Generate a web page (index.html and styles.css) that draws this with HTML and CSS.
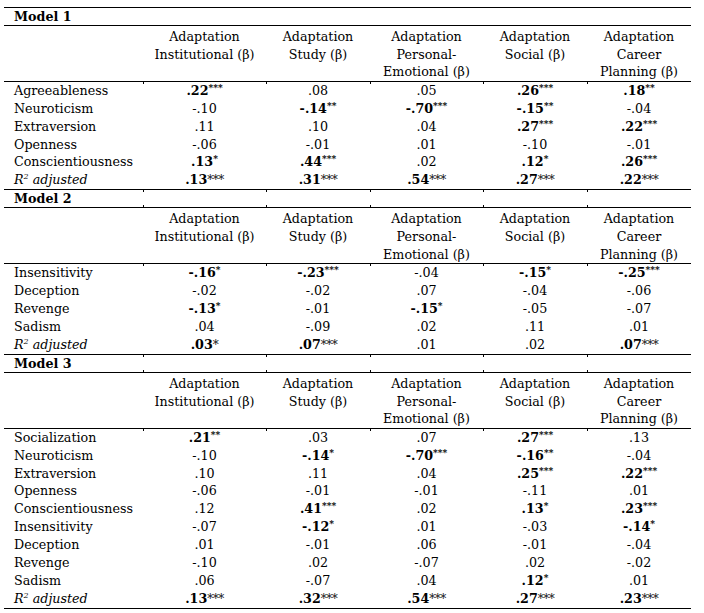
FILE: index.html
```html
<!DOCTYPE html>
<html lang="en">
<head>
<meta charset="utf-8">
<title>Regression models</title>
<link rel="stylesheet" href="styles.css">
</head>
<body>
<div class="page">
<table class="reg">
<colgroup>
<col class="c-label"><col class="c-inst"><col class="c-study"><col class="c-pers"><col class="c-soc"><col class="c-car">
</colgroup>
<tbody>
<tr class="title first"><th class="lab">Model 1</th><td></td><td></td><td></td><td></td><td></td></tr>
<tr class="head"><th></th><th>Adaptation<br>Institutional (β)</th><th>Adaptation<br>Study (β)</th><th>Adaptation<br>Personal-<br>Emotional (β)</th><th>Adaptation<br>Social (β)</th><th>Adaptation<br>Career<br>Planning (β)</th></tr>
<tr class="data top"><td class="lab">Agreeableness</td><td><b>.22<sup>***</sup></b></td><td>.08</td><td>.05</td><td><b>.26<sup>***</sup></b></td><td><b>.18<sup>**</sup></b></td></tr>
<tr class="data"><td class="lab">Neuroticism</td><td>-.10</td><td><b>-.14<sup>**</sup></b></td><td><b>-.70<sup>***</sup></b></td><td><b>-.15<sup>**</sup></b></td><td>-.04</td></tr>
<tr class="data"><td class="lab">Extraversion</td><td>.11</td><td>.10</td><td>.04</td><td><b>.27<sup>***</sup></b></td><td><b>.22<sup>***</sup></b></td></tr>
<tr class="data"><td class="lab">Openness</td><td>-.06</td><td>-.01</td><td>.01</td><td>-.10</td><td>-.01</td></tr>
<tr class="data"><td class="lab">Conscientiousness</td><td><b>.13<sup>*</sup></b></td><td><b>.44<sup>***</sup></b></td><td>.02</td><td><b>.12<sup>*</sup></b></td><td><b>.26<sup>***</sup></b></td></tr>
<tr class="data r2"><td class="lab"><i>R<sup>2</sup> adjusted</i></td><td><b>.13</b><span class="st">***</span></td><td><b>.31</b><span class="st">***</span></td><td><b>.54</b><span class="st">***</span></td><td><b>.27</b><span class="st">***</span></td><td><b>.22</b><span class="st">***</span></td></tr>

<tr class="title"><th class="lab">Model 2</th><td></td><td></td><td></td><td></td><td></td></tr>
<tr class="head"><th></th><th>Adaptation<br>Institutional (β)</th><th>Adaptation<br>Study (β)</th><th>Adaptation<br>Personal-<br>Emotional (β)</th><th>Adaptation<br>Social (β)</th><th>Adaptation<br>Career<br>Planning (β)</th></tr>
<tr class="data top"><td class="lab">Insensitivity</td><td><b>-.16<sup>*</sup></b></td><td><b>-.23<sup>***</sup></b></td><td>-.04</td><td><b>-.15<sup>*</sup></b></td><td><b>-.25<sup>***</sup></b></td></tr>
<tr class="data"><td class="lab">Deception</td><td>-.02</td><td>-.02</td><td>.07</td><td>-.04</td><td>-.06</td></tr>
<tr class="data"><td class="lab">Revenge</td><td><b>-.13<sup>*</sup></b></td><td>-.01</td><td><b>-.15<sup>*</sup></b></td><td>-.05</td><td>-.07</td></tr>
<tr class="data"><td class="lab">Sadism</td><td>.04</td><td>-.09</td><td>.02</td><td>.11</td><td>.01</td></tr>
<tr class="data r2"><td class="lab"><i>R<sup>2</sup> adjusted</i></td><td><b>.03</b><span class="st">*</span></td><td><b>.07</b><span class="st">***</span></td><td>.01</td><td>.02</td><td><b>.07</b><span class="st">***</span></td></tr>

<tr class="title"><th class="lab">Model 3</th><td></td><td></td><td></td><td></td><td></td></tr>
<tr class="head"><th></th><th>Adaptation<br>Institutional (β)</th><th>Adaptation<br>Study (β)</th><th>Adaptation<br>Personal-<br>Emotional (β)</th><th>Adaptation<br>Social (β)</th><th>Adaptation<br>Career<br>Planning (β)</th></tr>
<tr class="data top"><td class="lab">Socialization</td><td><b>.21<sup>**</sup></b></td><td>.03</td><td>.07</td><td><b>.27<sup>***</sup></b></td><td>.13</td></tr>
<tr class="data"><td class="lab">Neuroticism</td><td>-.10</td><td><b>-.14<sup>*</sup></b></td><td><b>-.70<sup>***</sup></b></td><td><b>-.16<sup>**</sup></b></td><td>-.04</td></tr>
<tr class="data"><td class="lab">Extraversion</td><td>.10</td><td>.11</td><td>.04</td><td><b>.25<sup>***</sup></b></td><td><b>.22<sup>***</sup></b></td></tr>
<tr class="data"><td class="lab">Openness</td><td>-.06</td><td>-.01</td><td>-.01</td><td>-.11</td><td>.01</td></tr>
<tr class="data"><td class="lab">Conscientiousness</td><td>.12</td><td><b>.41<sup>***</sup></b></td><td>.02</td><td><b>.13<sup>*</sup></b></td><td><b>.23<sup>***</sup></b></td></tr>
<tr class="data"><td class="lab">Insensitivity</td><td>-.07</td><td><b>-.12<sup>*</sup></b></td><td>.01</td><td>-.03</td><td><b>-.14<sup>*</sup></b></td></tr>
<tr class="data"><td class="lab">Deception</td><td>.01</td><td>-.01</td><td>.06</td><td>-.01</td><td>-.04</td></tr>
<tr class="data"><td class="lab">Revenge</td><td>-.10</td><td>.02</td><td>-.07</td><td>.02</td><td>-.02</td></tr>
<tr class="data"><td class="lab">Sadism</td><td>.06</td><td>-.07</td><td>.04</td><td><b>.12<sup>*</sup></b></td><td>.01</td></tr>
<tr class="data r2"><td class="lab"><i>R<sup>2</sup> adjusted</i></td><td><b>.13</b><span class="st">***</span></td><td><b>.32</b><span class="st">***</span></td><td><b>.54</b><span class="st">***</span></td><td><b>.27</b><span class="st">***</span></td><td><b>.23</b><span class="st">***</span></td></tr>
</tbody>
</table>
</div>
</body>
</html>
```

FILE: styles.css
```css
html, body {
  margin: 0;
  padding: 0;
  background: #ffffff;
}

.page {
  padding: 7px 0 0 4px;
}

.reg {
  border-collapse: collapse;
  table-layout: fixed;
  width: 687px;
  font-family: "DejaVu Serif", "Liberation Serif", serif;
  font-size: 12.7px;
  color: #000;
}

.c-label { width: 139px; }
.c-inst { width: 123px; }
.c-study { width: 104px; }
.c-pers { width: 113px; }
.c-soc { width: 104px; }
.c-car { width: 104px; }

.reg th,
.reg td {
  padding: 0;
  font-weight: normal;
  text-align: center;
  vertical-align: top;
  line-height: 17.85px;
  white-space: nowrap;
}

.reg .lab {
  text-align: left;
  padding-left: 10px;
}

.title th,
.title td {
  height: 17px;
  line-height: 17px;
  border-top: 1px solid #000;
  border-bottom: 1px solid #000;
}

.title th.lab {
  font-weight: bold;
}

.title:not(.first) td {
  background:
    linear-gradient(#000, #000) no-repeat left top / 1px 2px,
    linear-gradient(#000, #000) no-repeat left bottom / 1px 2px;
}

.head th {
  height: 50.5px;
  padding-top: 2px;
  line-height: 17.7px;
  border-bottom: 1px solid #000;
}

.data td {
  height: 17.85px;
}

.data.top td:not(.lab) {
  background: linear-gradient(#000, #000) no-repeat left top / 1px 2px;
}

.data.r2 td {
  height: 17px;
  line-height: 17px;
  border-bottom: 1px solid #000;
}

.reg b {
  font-weight: bold;
}

.reg sup {
  font-size: 9px;
  line-height: 0;
  vertical-align: 4px;
}

.reg i sup {
  font-size: 8px;
  vertical-align: 5px;
}

.st {
  font-size: 12px;
  font-weight: normal;
  color: #111;
  letter-spacing: -0.5px;
}
```
